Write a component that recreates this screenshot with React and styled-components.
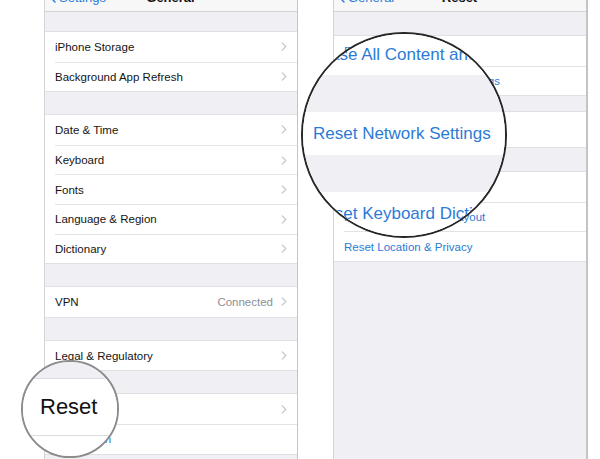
import styled, { createGlobalStyle } from "styled-components";

const blue = "#2b7bd6";

const GlobalStyle = createGlobalStyle`
  html, body {
    margin: 0;
    padding: 0;
    background: #ffffff;
  }
  body {
    font-family: "Liberation Sans", Arial, sans-serif;
  }
`;

const Page = styled.div`
  position: relative;
  display: flex;
  gap: 35px;
  width: 600px;
  height: 459px;
  padding-left: 44px;
  box-sizing: border-box;
  overflow: hidden;
  background: #ffffff;
`;

const Phone = styled.div`
  width: ${(p) => p.w}px;
  height: 459px;
  box-sizing: border-box;
  background: #efeff4;
  border-left: 1px solid #d4d4d8;
  border-right: ${(p) => p.edge || 1}px solid #c4c4c8;
  display: flex;
  flex-direction: column;
`;

const NavBar = styled.div`
  height: 12px;
  flex: none;
  overflow: hidden;
  background: #f7f7f8;
  border-bottom: 1px solid #d2d2d6;
  box-sizing: border-box;
  display: grid;
  grid-template-columns: 1fr auto 1fr;
  align-items: end;
  align-content: end;
  padding: 0 6px 6px 5px;
  font-size: 13px;
  line-height: 14px;
`;

const Back = styled.div`
  display: flex;
  align-items: center;
  gap: 3px;
  color: ${blue};
`;

const Title = styled.div`
  color: #111;
  font-weight: bold;
`;

const Gap = styled.div`
  height: ${(p) => p.h}px;
  flex: none;
`;

const Group = styled.div`
  flex: none;
  background: #ffffff;
  box-shadow: 0 -1px 0 #e0e0e4, 0 1px 0 #e0e0e4;
`;

const RowBody = styled.div`
  flex: 1;
  height: 100%;
  display: flex;
  align-items: center;
  gap: 8px;
  padding-right: 10px;
  box-sizing: border-box;
`;

const Row = styled.div`
  height: ${(p) => p.h || 29.6}px;
  display: flex;
  padding-left: 10px;
  font-size: 11.5px;
  color: ${(p) => (p.action ? blue : "#141414")};
  white-space: nowrap;

  &:not(:first-child) ${RowBody} {
    border-top: 1px solid #e3e3e6;
  }
`;

const Label = styled.span`
  flex: 1;
`;

const Detail = styled.span`
  color: #8e8e93;
`;

const Lens = styled.div`
  position: absolute;
  left: ${(p) => p.x}px;
  top: ${(p) => p.y}px;
  width: ${(p) => p.size}px;
  height: ${(p) => p.size}px;
  box-sizing: border-box;
  border-radius: 50%;
  border: 2px solid ${(p) => p.ring};
  background: #ffffff;
  overflow: hidden;
  display: flex;
  flex-direction: column;
`;

const LensBand = styled.div`
  height: ${(p) => p.h}px;
  flex: none;
  display: flex;
  align-items: center;
  padding-left: ${(p) => p.pad || 10}px;
  box-sizing: border-box;
  background: ${(p) => (p.gray ? "#efeff4" : "#ffffff")};
  font-size: ${(p) => p.size || 17}px;
  color: ${(p) => (p.dark ? "#111" : blue)};
  white-space: nowrap;
  border-bottom: ${(p) => (p.line ? "1px solid #dcdce0" : "none")};
`;

const Chevron = ({ color = "#c7c7cc", h = 9, back }) => (
  <svg width="6" height={h} viewBox="0 0 6 10" fill="none">
    <path
      d={back ? "M5 1 L1 5 L5 9" : "M1 1 L5 5 L1 9"}
      stroke={color}
      strokeWidth="1.4"
      strokeLinecap="round"
      strokeLinejoin="round"
    />
  </svg>
);

const SettingRow = ({ label, detail }) => (
  <Row>
    <RowBody>
      <Label>{label}</Label>
      {detail && <Detail>{detail}</Detail>}
      <Chevron />
    </RowBody>
  </Row>
);

const ActionRow = ({ label, h }) => (
  <Row action h={h}>
    <RowBody>
      <Label>{label}</Label>
    </RowBody>
  </Row>
);

export default function App() {
  return (
    <>
      <GlobalStyle />
      <Page>
        <Phone w={254}>
          <NavBar>
            <Back>
              <Chevron color={blue} h={14} back />
              Settings
            </Back>
            <Title>General</Title>
            <span />
          </NavBar>
          <Gap h={20} />
          <Group>
            <SettingRow label="iPhone Storage" />
            <SettingRow label="Background App Refresh" />
          </Group>
          <Gap h={24} />
          <Group>
            <SettingRow label="Date & Time" />
            <SettingRow label="Keyboard" />
            <SettingRow label="Fonts" />
            <SettingRow label="Language & Region" />
            <SettingRow label="Dictionary" />
          </Group>
          <Gap h={24} />
          <Group>
            <SettingRow label="VPN" detail="Connected" />
          </Group>
          <Gap h={24} />
          <Group>
            <SettingRow label="Legal & Regulatory" />
          </Group>
          <Gap h={24} />
          <Group>
            <SettingRow label="Reset" />
            <ActionRow label="Shut Down" />
          </Group>
        </Phone>

        <Phone w={255} edge={2}>
          <NavBar>
            <Back>
              <Chevron color={blue} h={14} back />
              General
            </Back>
            <Title>Reset</Title>
            <span />
          </NavBar>
          <Gap h={24} />
          <Group>
            <ActionRow label="Reset All Settings" />
            <ActionRow label="Erase All Content and Settings" />
          </Group>
          <Gap h={17} />
          <Group>
            <ActionRow label="Reset Network Settings" h={35} />
          </Group>
          <Gap h={25} />
          <Group>
            <ActionRow label="Reset Keyboard Dictionary" />
            <ActionRow label="Reset Home Screen Layout" />
            <ActionRow label="Reset Location & Privacy" />
          </Group>
        </Phone>

        <Lens x={301} y={32} size={206} ring="#262626">
          <LensBand h={41}>Erase All Content and Settings</LensBand>
          <LensBand h={37} gray />
          <LensBand h={43}>Reset Network Settings</LensBand>
          <LensBand h={37} gray />
          <LensBand h={44}>Reset Keyboard Dictionary</LensBand>
        </Lens>

        <Lens x={21} y={360} size={98} ring="#8c8c8c">
          <LensBand h={17} gray line />
          <LensBand h={57} dark size={22} pad={17} line>
            Reset
          </LensBand>
          <LensBand h={30} />
        </Lens>
      </Page>
    </>
  );
}
